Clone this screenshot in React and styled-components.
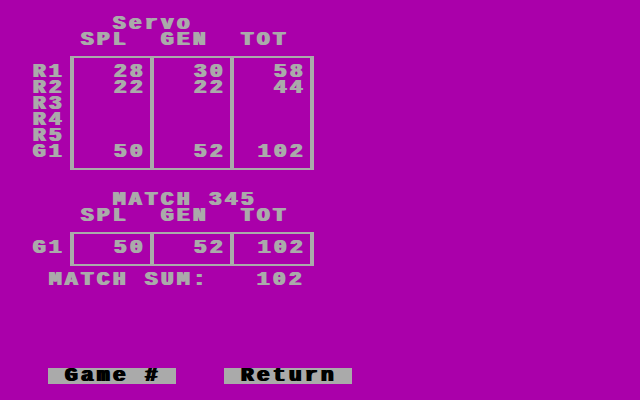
import styled, { createGlobalStyle } from "styled-components";

// 40-column text mode: every character cell is 16x16
const CELL = 16;
const GREY = "#aaaaaa";
const MAGENTA = "#aa00aa";

const Global = createGlobalStyle`
  html, body {
    margin: 0;
    padding: 0;
    background: ${MAGENTA};
  }
`;

const Screen = styled.div`
  width: 640px;
  height: 400px;
  box-sizing: border-box;
  padding: 16px 0;
  background: ${MAGENTA};
  color: ${GREY};
  font-family: "Liberation Mono", "DejaVu Sans Mono", monospace;
  font-weight: bold;
  font-size: 21px;
  line-height: 16px;
  letter-spacing: 3.4px;
  /* chunky double-width strokes of the old ROM font */
  text-shadow: 1px 0 0 currentColor, 2px 0 0 currentColor;
  display: flex;
  flex-direction: column;
  overflow: hidden;
`;

const Line = styled.div`
  height: ${CELL}px;
  white-space: pre;
  padding-left: ${(p) => p.$col * CELL}px;
  margin-top: ${(p) => p.$gap || 0}px;
`;

const Table = styled.div`
  display: flex;
  margin-top: 8px;
`;

const Labels = styled.div`
  flex-shrink: 0;
  width: 38px;
  padding-left: 32px;
  padding-top: 8px;
`;

const Box = styled.div`
  display: flex;
  border-style: solid;
  border-color: ${GREY};
  border-width: 2px 4px;
`;

const Cell = styled.div`
  width: 76px;
  box-sizing: border-box;
  padding: 6px 5px 8px 0;
  text-align: right;

  & + & {
    width: 80px;
    border-left: 4px solid ${GREY};
  }
`;

const Value = styled.div`
  height: ${CELL}px;
  white-space: pre;
`;

const ButtonBar = styled.div`
  display: flex;
  gap: 48px;
  margin-top: auto;
  padding-left: 48px;
`;

const Key = styled.div`
  height: ${CELL}px;
  padding: 0 16px;
  background: ${GREY};
  color: #000;
  white-space: pre;
`;

function ScoreTable({ labels, columns }) {
  return (
    <Table>
      <Labels>
        {labels.map((l) => (
          <Value key={l}>{l}</Value>
        ))}
      </Labels>
      <Box>
        {columns.map((col, i) => (
          <Cell key={i}>
            {col.map((v, j) => (
              <Value key={j}>{v === "" ? " " : v}</Value>
            ))}
          </Cell>
        ))}
      </Box>
    </Table>
  );
}

export default function App() {
  const rounds = ["R1", "R2", "R3", "R4", "R5", "G1"];
  const rounds_cols = [
    [28, 22, "", "", "", 50],
    [30, 22, "", "", "", 52],
    [58, 44, "", "", "", 102],
  ];

  return (
    <>
      <Global />
      <Screen>
        <Line $col={7}>Servo</Line>
        <Line $col={5}>SPL  GEN  TOT</Line>
        <ScoreTable labels={rounds} columns={rounds_cols} />

        <Line $col={7} $gap={22}>MATCH 345</Line>
        <Line $col={5}>SPL  GEN  TOT</Line>
        <ScoreTable labels={["G1"]} columns={[[50], [52], [102]]} />
        <Line $col={3} $gap={6}>MATCH SUM:   102</Line>

        <ButtonBar>
          <Key>Game #</Key>
          <Key>Return</Key>
        </ButtonBar>
      </Screen>
    </>
  );
}
